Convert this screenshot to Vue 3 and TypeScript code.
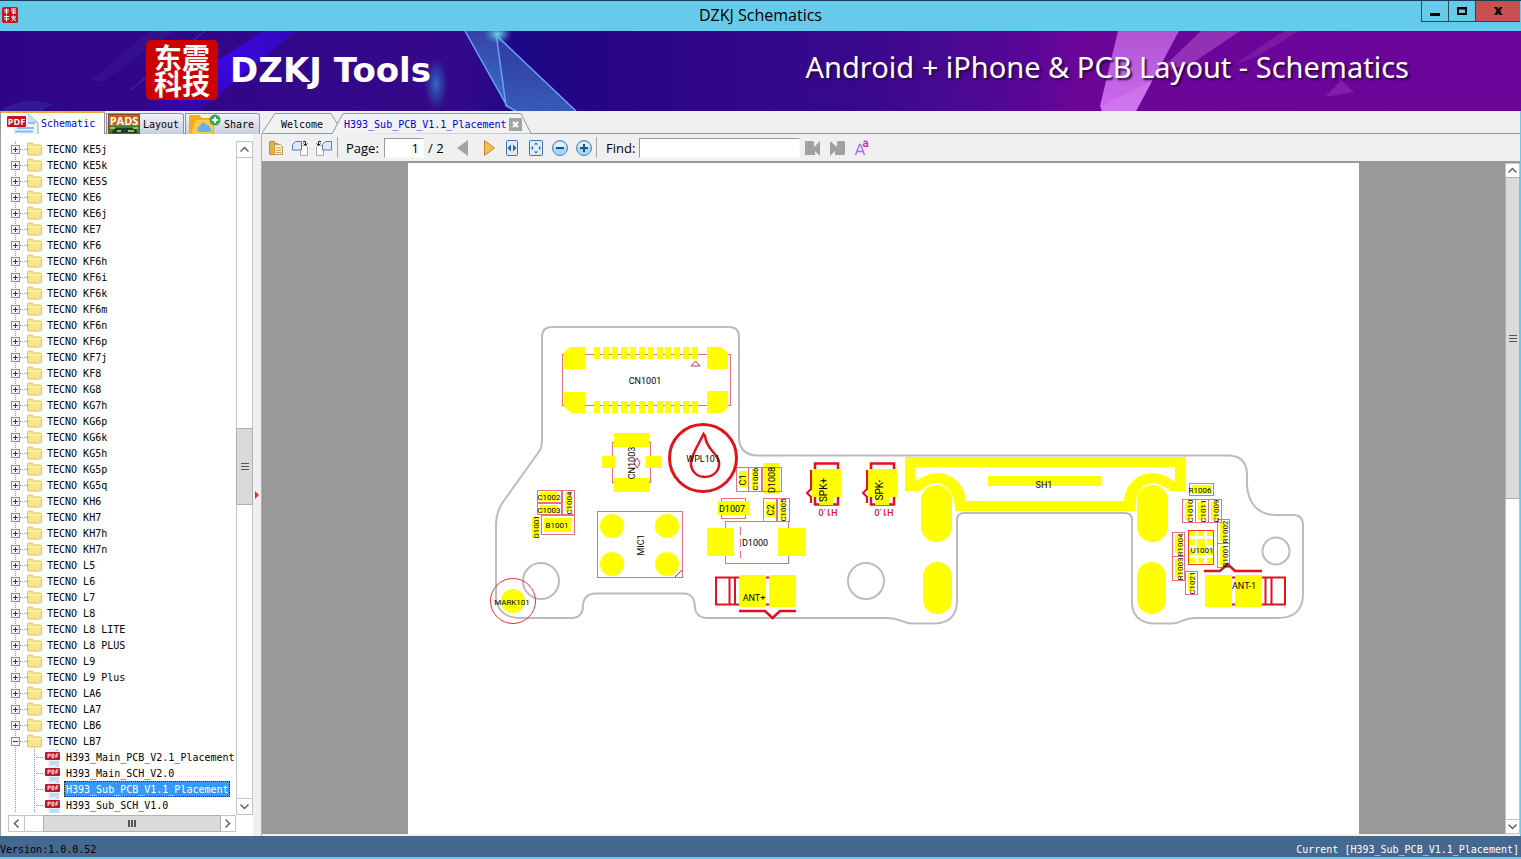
<script setup lang="ts">
import { ref } from 'vue'

interface Folder {
  name: string
  files?: string[]
}

interface Label {
  t: string
  x: number
  y: number
  v?: boolean
  size?: 'mid' | 'big'
}

type Box = [number, number, number, number]

const models = [
  'KE5j', 'KE5k', 'KE5S', 'KE6', 'KE6j', 'KE7', 'KF6', 'KF6h', 'KF6i', 'KF6k', 'KF6m', 'KF6n', 'KF6p',
  'KF7j', 'KF8', 'KG8', 'KG7h', 'KG6p', 'KG6k', 'KG5h', 'KG5p', 'KG5q', 'KH6', 'KH7', 'KH7h', 'KH7n',
  'L5', 'L6', 'L7', 'L8', 'L8 LITE', 'L8 PLUS', 'L9', 'L9 Plus', 'LA6', 'LA7', 'LB6',
]

const folders: Folder[] = [
  ...models.map((m) => ({ name: 'TECNO ' + m })),
  {
    name: 'TECNO LB7',
    files: ['H393_Main_PCB_V2.1_Placement', 'H393_Main_SCH_V2.0', 'H393_Sub_PCB_V1.1_Placement', 'H393_Sub_SCH_V1.0'],
  },
]

const opened = ref<string[]>(['TECNO LB7'])
const selected = ref('H393_Sub_PCB_V1.1_Placement')
const page = ref('1')
const find = ref('')

function toggle(name: string) {
  opened.value = opened.value.includes(name) ? opened.value.filter((n) => n !== name) : [...opened.value, name]
}

const pins = Array.from({ length: 12 }, (_, i) => 594 + Math.round(i * 8.93))

const pads: Box[] = [
  [614, 433, 35, 14], [614, 478, 35, 14], [602, 456, 13, 12], [646, 456, 15, 12],
  [739, 471, 8, 16], [752, 469, 6, 21], [764, 463, 15, 31],
  [718, 501, 31, 14], [766, 502, 9, 15], [780, 501, 6, 18],
  [707, 528, 27, 28], [778, 528, 28, 28],
  [988, 476, 113, 10],
  [1192, 485, 19, 9],
  [1185, 502, 7, 18], [1198, 502, 7, 18], [1211, 502, 7, 18],
  [1220, 522, 6, 19], [1220, 546, 6, 19],
  [1175, 535, 6, 18], [1175, 559, 6, 18], [1188, 573, 6, 18],
  [540, 492, 18, 9], [540, 505, 18, 8], [565, 493, 6, 19], [544, 518, 27, 14], [532, 517, 7, 21],
]

const outlines: Box[] = [
  [736, 467, 12, 24], [748, 467, 13, 24], [762, 467, 19, 24],
  [721, 498, 24, 20], [763, 498, 13, 23], [777, 498, 12, 23],
  [725, 521, 63, 42], [597, 511, 85, 66],
  [537, 490, 24, 12], [537, 503, 24, 11], [562, 490, 12, 24], [541, 515, 33, 19],
  [1189, 483, 24, 12], [1182, 499, 13, 23], [1195, 499, 13, 23], [1208, 499, 13, 23],
  [1217, 519, 12, 24], [1217, 543, 12, 24],
  [1172, 532, 12, 24], [1172, 556, 12, 24], [1185, 571, 12, 23],
]

const slots: Box[] = [
  [921, 485, 31, 57], [923, 562, 29, 52], [1137, 485, 31, 57], [1137, 562, 29, 52],
]

const labels: Label[] = [
  { t: 'CN1001', x: 645, y: 381, size: 'mid' },
  { t: 'CN1003', x: 632, y: 463, v: true, size: 'mid' },
  { t: 'WPL101', x: 703, y: 459, size: 'mid' },
  { t: 'C1', x: 743, y: 480, v: true, size: 'mid' },
  { t: 'C1006', x: 755, y: 479, v: true },
  { t: 'D1008', x: 772, y: 480, v: true, size: 'mid' },
  { t: 'D1007', x: 732, y: 509, size: 'mid' },
  { t: 'C2', x: 771, y: 510, v: true, size: 'mid' },
  { t: 'C1005', x: 783, y: 510, v: true },
  { t: 'D1000', x: 755, y: 543, size: 'mid' },
  { t: 'SPK+', x: 824, y: 490, v: true, size: 'big' },
  { t: 'SPK-', x: 880, y: 490, v: true, size: 'big' },
  { t: 'ANT+', x: 754, y: 598, size: 'mid' },
  { t: 'SH1', x: 1044, y: 485, size: 'mid' },
  { t: 'R1006', x: 1200, y: 490 },
  { t: 'C1010', x: 1190, y: 511, v: true },
  { t: 'C1011', x: 1203, y: 511, v: true },
  { t: 'C1009', x: 1216, y: 511, v: true },
  { t: 'R1002', x: 1225, y: 532, v: true },
  { t: 'R1001', x: 1225, y: 556, v: true },
  { t: 'R1004', x: 1180, y: 545, v: true },
  { t: 'R1003', x: 1180, y: 569, v: true },
  { t: 'C1021', x: 1192, y: 583, v: true },
  { t: 'U1001', x: 1202, y: 550 },
  { t: 'ANT-1', x: 1244, y: 586, size: 'mid' },
  { t: 'MARK101', x: 512, y: 602 },
  { t: 'MIC1', x: 641, y: 545, v: true, size: 'mid' },
  { t: 'C1002', x: 549, y: 497 },
  { t: 'C1003', x: 549, y: 510 },
  { t: 'C1004', x: 569, y: 503, v: true },
  { t: 'B1001', x: 557, y: 525 },
  { t: 'D1001', x: 536, y: 527, v: true },
]
</script>

<template>
  <div class="window">
    <header class="titlebar">
      <svg class="app-icon" viewBox="0 0 16 16" aria-hidden="true">
        <rect width="16" height="16" rx="2" fill="#c8141c" />
        <path d="M2 3h5M4.500 1.500v6M2.500 5l4 0M9 2h5M9 4h5M10 6h4M11.500 2v5M2 9.500h5M4.500 8.500v6M2 12h5M9 10h5M11.500 8.500v3M9.500 14l4-3M10 11l4 3" stroke="#fff" stroke-width="1" fill="none" />
      </svg>
      <h1>DZKJ Schematics</h1>
      <div class="controls">
        <button type="button" aria-label="Minimize"><svg viewBox="0 0 12 12"><path d="M1 8h10v3H1z" /></svg></button>
        <button type="button" aria-label="Maximize"><svg viewBox="0 0 12 12"><path d="M1 2h10v8H1zM3 4.500v3.500h6V4.500z" fill-rule="evenodd" /></svg></button>
        <button type="button" class="close" aria-label="Close"><svg viewBox="0 0 12 12"><path d="M2 2h3l1.500 2L8 2h2.500L8 6l2.500 4h-3L6.200 8 5 10H2l2.800-4z" /></svg></button>
      </div>
    </header>

    <section class="banner">
      <svg class="banner-art" viewBox="0 31 1521 80" preserveAspectRatio="none" aria-hidden="true">
        <defs>
          <linearGradient id="sky">
            <stop offset="0" stop-color="#2f0587" />
            <stop offset=".29" stop-color="#35088a" />
            <stop offset=".31" stop-color="#30098a" />
            <stop offset=".345" stop-color="#1c0886" />
            <stop offset=".4" stop-color="#270584" />
            <stop offset=".46" stop-color="#30078a" />
            <stop offset=".56" stop-color="#37088c" />
            <stop offset=".64" stop-color="#4d0894" />
            <stop offset=".68" stop-color="#5a0698" />
            <stop offset=".71" stop-color="#6c0699" />
            <stop offset="1" stop-color="#6b0499" />
          </linearGradient>
          <linearGradient id="beam" x1="0" y1="1" x2="1" y2="0">
            <stop offset="0" stop-color="#3506c8" stop-opacity=".3" />
            <stop offset=".6" stop-color="#3b08e2" />
            <stop offset="1" stop-color="#3207b8" />
          </linearGradient>
          <linearGradient id="glass" x1="0" y1="0" x2="0" y2="1">
            <stop offset="0" stop-color="#3443a8" />
            <stop offset="1" stop-color="#3c70c6" />
          </linearGradient>
          <linearGradient id="pink" x1="0" y1="0" x2="0" y2="1">
            <stop offset="0" stop-color="#b054d4" />
            <stop offset="1" stop-color="#cc6cee" />
          </linearGradient>
          <radialGradient id="glow">
            <stop offset="0" stop-color="#2a78c4" stop-opacity=".9" />
            <stop offset="1" stop-color="#2a60c0" stop-opacity="0" />
          </radialGradient>
          <radialGradient id="spark">
            <stop offset="0" stop-color="#6cdce4" />
            <stop offset="1" stop-color="#40a0d8" stop-opacity="0" />
          </radialGradient>
        </defs>
        <rect y="31" width="1521" height="80" fill="url(#sky)" />
        <path d="M263 31H296L198 111H140z" fill="url(#beam)" />
        <path d="M150 31h24l-70 50h-14z" fill="#3f2796" opacity=".3" />
        <path d="M205 31L130 90" stroke="#554bb8" opacity=".7" />
        <path d="M0 111q25-16 52-7l-10 7z" fill="#32309f" opacity=".5" />
        <ellipse cx="436" cy="84" rx="12" ry="27" fill="url(#glow)" />
        <path d="M465 31H496L507 107z" fill="url(#glass)" />
        <path d="M497 35L576 111H514L506 107z" fill="url(#glass)" opacity=".8" />
        <path d="M465 31L507 106L516 111M496 33L506 106M498 37L576 111" fill="none" stroke="#6f9ff0" stroke-width="1.500" />
        <ellipse cx="498" cy="34" rx="14" ry="10" fill="url(#spark)" />
        <path d="M1118 31H1179L1136 111H1102L1100 106z" fill="url(#pink)" />
        <path d="M1101 106L1152 81L1136 111H1102z" fill="#cf78f0" opacity=".7" />
        <path d="M1201 31H1240L1194 62L1155 75z" fill="#9e3cba" opacity=".8" />
        <path d="M1284 31H1299L1256 57L1235 64z" fill="#8427a8" opacity=".6" />
        <path d="M1341 80L1354 92L1325 97z" fill="#8a28ac" opacity=".7" />
      </svg>
      <div class="brand">
        <div class="seal" lang="zh">东震科技</div>
        <strong>DZKJ Tools</strong>
      </div>
      <p class="slogan">Android + iPhone &amp; PCB Layout - Schematics</p>
    </section>

    <main class="work">
      <aside class="side">
        <nav class="side-tabs">
          <button type="button" class="side-tab current">
            <svg width="34" height="20" viewBox="0 0 34 20" aria-hidden="true">
              <path d="M6 0h17l8 8v12H6z" fill="#eef4fb" />
              <path d="M21 0l10 9v11" fill="none" stroke="#8fa7be" />
              <path d="M21 0v9h9z" fill="#cfdeed" />
              <path d="M21 9h7M10 14h17M8 17.500h18" stroke="#86bce8" stroke-width="2" />
              <rect y="2" width="19" height="11" rx="1" fill="#c3131d" />
              <text x="9.500" y="11" text-anchor="middle" class="badge">PDF</text>
            </svg>
            <span>Schematic</span>
          </button>
          <button type="button" class="side-tab">
            <svg width="32" height="20" viewBox="0 0 32 20" aria-hidden="true">
              <rect width="32" height="20" fill="#c8601c" />
              <path d="M1 12h30v8H1z" fill="#3f7f35" />
              <path d="M4 17l4-3h18l3 3v3H4z" fill="#203c26" />
              <path d="M2 14h5M25 14h5M9 17h4M20 17h6" stroke="#86c55a" stroke-width="2" />
              <text x="16" y="11" text-anchor="middle" class="badge large">PADS</text>
              <rect x=".5" y=".5" width="31" height="19" fill="none" stroke="#8d4a1c" />
            </svg>
            <span>Layout</span>
          </button>
          <button type="button" class="side-tab share">
            <svg width="32" height="20" viewBox="0 0 32 20" aria-hidden="true">
              <path d="M0 3q0-2 2-2h8l3 3h10q2 0 2 2v14H0z" fill="#f2ae1c" />
              <path d="M2 20L7 6h19l-3 14z" fill="#fccb45" />
              <path d="M10 18q-4-4 1-6q2-6 6-2q4 1 4 4q3 2 0 4z" fill="#63b2ef" />
              <circle cx="26" cy="6" r="5.500" fill="#39a84a" />
              <path d="M23 6h6M26 3v6" stroke="#fff" stroke-width="2" />
            </svg>
            <span>Share</span>
          </button>
        </nav>

        <div class="panel">
          <ul class="tree">
            <li v-for="f in folders" :key="f.name">
              <div class="row">
                <button type="button" class="expander" :aria-label="'Toggle ' + f.name" @click="toggle(f.name)">
                  <svg viewBox="0 0 9 9">
                    <rect x=".5" y=".5" width="8" height="8" fill="#f4f4f4" stroke="#8c8c8c" />
                    <path d="M2 4.500h5" stroke="#223a66" />
                    <path v-if="!opened.includes(f.name)" d="M4.500 2v5" stroke="#223a66" />
                  </svg>
                </button>
                <i class="dots"></i>
                <svg class="folder" viewBox="0 0 15 14" aria-hidden="true">
                  <path d="M.5 2q0-1 1-1h4l1.500 2H13q1.500 0 1.500 1.500V12q0 1-1 1H1.500q-1 0-1-1z" fill="#f6e68a" stroke="#dcc25c" />
                  <path d="M1 5h13" stroke="#fff6c0" />
                </svg>
                <span class="name">{{ f.name }}</span>
              </div>
              <ul v-if="f.files && opened.includes(f.name)" class="files">
                <li v-for="file in f.files" :key="file" class="row">
                  <i class="dots"></i>
                  <svg class="pdf" viewBox="0 0 16 16" aria-hidden="true">
                    <path d="M3 0h8l4 3v13H3z" fill="#e6f0fa" />
                    <path d="M5 13h9M5 15h9M11 1h3" stroke="#9cc8ea" />
                    <rect y="3" width="15" height="8" rx="1" fill="#bb1822" />
                    <path d="M3 9V5h1.500q1 0 1 1t-1 1H3M7 5v4h.8q1.200 0 1.200-2T7.800 5zM11 9V5h2.500M11 7h2" fill="none" stroke="#fff" stroke-width=".9" />
                  </svg>
                  <button type="button" class="file" :class="{ picked: file === selected }" @click="selected = file">{{ file }}</button>
                </li>
              </ul>
            </li>
          </ul>
          <div class="bar vertical">
            <button type="button" aria-label="Scroll up"><svg viewBox="0 0 9 9"><path d="M.5 6.500l4-4l4 4" /></svg></button>
            <div class="track"><div class="thumb"><i></i></div></div>
            <button type="button" aria-label="Scroll down"><svg viewBox="0 0 9 9"><path d="M.5 2.500l4 4l4-4" /></svg></button>
          </div>
          <div class="bar horizontal">
            <button type="button" aria-label="Scroll left"><svg viewBox="0 0 9 9"><path d="M6.500 .5l-4 4l4 4" /></svg></button>
            <div class="track"><div class="thumb"><i></i></div></div>
            <button type="button" aria-label="Scroll right"><svg viewBox="0 0 9 9"><path d="M2.500 .5l4 4l-4 4" /></svg></button>
          </div>
        </div>
      </aside>

      <div class="splitter"><i></i></div>

      <section class="doc">
        <nav class="doc-tabs">
          <button type="button" class="doc-tab welcome">
            <svg viewBox="0 0 78 23" aria-hidden="true"><path d="M0 22L13 2.500H69L76 14" /></svg>
            <span>Welcome</span>
          </button>
          <div class="doc-tab active">
            <svg viewBox="0 0 202 23" aria-hidden="true"><path d="M0 23L11 2.500H189L199 22.500H202" /></svg>
            <span>H393_Sub_PCB_V1.1_Placement</span>
            <button type="button" class="shut" aria-label="Close tab"><svg viewBox="0 0 13 13"><path d="M4 4l5 5M9 4l-5 5" stroke="#fff" stroke-width="2" /></svg></button>
          </div>
        </nav>

        <div class="toolbar">
          <button type="button" class="tool" aria-label="Copy">
            <svg viewBox="0 0 16 16"><path d="M1.500 1.500h5v2h3v11h-8z" fill="#e8b04c" stroke="#bd8630" /><path d="M6.500 4.500h6l2 2v8h-8z" fill="#fdf3d4" stroke="#c29b50" /><path d="M8 8h5M8 10.500h5M8 12.500h5" stroke="#d2a04b" /></svg>
          </button>
          <button type="button" class="tool" aria-label="Rotate right">
            <svg viewBox="0 0 16 16"><path d="M8.500 5.500h6l1 1v9h-7z" fill="#fff" stroke="#aaa" /><path d="M3.500 1.500h6v8.500h-9v-5.500z" fill="#d9eafb" stroke="#547dae" /><path d="M11 1.500h2.500V5M11.500 3.500l2 2l2-2" fill="none" stroke="#222" /></svg>
          </button>
          <button type="button" class="tool" aria-label="Rotate left">
            <svg viewBox="0 0 16 16"><path d="M1.500 5.500h6v10h-7v-9z" fill="#fff" stroke="#aaa" /><path d="M9.500 1.500h6v8.500h-9v-5.500z" fill="#d9eafb" stroke="#547dae" /><path d="M5 1.500H2.500V5M.5 3.500l2 2l2-2" fill="none" stroke="#222" /></svg>
          </button>
          <i class="sep"></i>
          <label for="page">Page:</label>
          <input id="page" v-model="page" class="page-box" type="text" />
          <span class="total">/ 2</span>
          <button type="button" class="tool" aria-label="Previous page">
            <svg viewBox="0 0 16 16"><path d="M14 0v16L3 8z" fill="#a2a2a2" /></svg>
          </button>
          <button type="button" class="tool next" aria-label="Next page">
            <svg viewBox="0 0 16 16"><path d="M4.500 .5v15l10-7.500z" fill="#f2c052" stroke="#bd8a22" /></svg>
          </button>
          <button type="button" class="tool" aria-label="Fit width">
            <svg viewBox="0 0 16 16"><rect x="2.500" y=".5" width="11" height="15" rx="1" fill="#dcecfb" stroke="#3f72aa" /><path d="M7 4.500v7L3.500 8zM9 4.500v7L12.500 8z" fill="#2c639f" /></svg>
          </button>
          <button type="button" class="tool" aria-label="Fit page">
            <svg viewBox="0 0 16 16"><rect x="1.500" y=".5" width="13" height="15" rx="1" fill="#dcecfb" stroke="#3f72aa" /><path d="M8 2.500l2 2H6zM8 13.500l2-2H6zM3 8l2-2v4zM13 8l-2-2v4z" fill="#2c639f" /></svg>
          </button>
          <button type="button" class="tool" aria-label="Zoom out">
            <svg viewBox="0 0 16 16"><circle cx="8" cy="8" r="7.500" fill="#a8d4f7" stroke="#5684ac" /><path d="M2 8q0-6 6-6t6 6q-6-3-12 0" fill="#dff0fd" /><path d="M4 8h8" stroke="#18568f" stroke-width="2" /></svg>
          </button>
          <button type="button" class="tool" aria-label="Zoom in">
            <svg viewBox="0 0 16 16"><circle cx="8" cy="8" r="7.500" fill="#a8d4f7" stroke="#5684ac" /><path d="M2 8q0-6 6-6t6 6q-6-3-12 0" fill="#dff0fd" /><path d="M4 8h8M8 4v8" stroke="#18568f" stroke-width="2" /></svg>
          </button>
          <i class="sep tight"></i>
          <label for="find">Find:</label>
          <input id="find" v-model="find" class="find-box" type="text" />
          <button type="button" class="tool" aria-label="Find previous">
            <svg viewBox="0 0 16 16"><path d="M0 2l1-1h7l1 1v5l6-6v15l-5-5v4H0z" fill="#a0a0a0" /><path d="M2 4h1M6 4h1" stroke="#ccc" /></svg>
          </button>
          <button type="button" class="tool" aria-label="Find next">
            <svg viewBox="0 0 16 16"><path d="M15 2l-1-1H8L7 2v5L0 1v15l5-5v4h10z" fill="#a0a0a0" /><path d="M8 4h1M12 4h1" stroke="#ccc" /></svg>
          </button>
          <button type="button" class="tool" aria-label="Match case">
            <svg viewBox="0 0 16 16"><path d="M.5 15L4.500 4.500h1L9.500 15M2 11.500h6" fill="none" stroke="#9879ee" stroke-width="1.500" /><path d="M8.500 1.500q4-1 4 1.500v4M12.500 3.500q-4-.5-4 1.500t4 1" fill="none" stroke="#c53cae" stroke-width="1.500" /></svg>
          </button>
        </div>

        <div class="viewer">
          <div class="canvas">
            <svg class="sheet" viewBox="408 163 951 671" preserveAspectRatio="xMidYMid meet" role="img" aria-label="Component placement">
              <g fill="none" stroke="#bcbcbc" stroke-width="2">
                <path d="M552 327H729Q739 327 739 337V440Q741 455 757 455.500H1230Q1247 457 1247 475V485C1248 502 1257 515 1276 515H1293Q1303 515 1303 525V596C1302 610 1294 618 1278 618H1195C1182 618 1184 623 1172 623.500H1152Q1132 621 1132 602V520Q1132 513 1125 513H964Q957 513 957 520V602Q956 623 935 623.500H912C902 623 900 618 888 618H706Q696 617 695 608Q695 594 684 593.500H595Q584 594 583 605Q583 617 573 618H517Q498 616 496 598V526Q496 512 503 502L538 453Q542 448 542 440V337Q542 327 552 327Z" />
                <circle cx="541" cy="581" r="18" /><circle cx="866" cy="581" r="18" /><circle cx="1276" cy="551" r="13.500" />
              </g>

              <g fill="#ffff00">
                <rect v-for="(b, i) in pads" :key="i" :x="b[0]" :y="b[1]" :width="b[2]" :height="b[3]" />
                <rect v-for="(b, i) in slots" :key="'s' + i" :x="b[0]" :y="b[1]" :width="b[2]" :height="b[3]" :rx="b[2] / 2" />
                <path fill-rule="evenodd" d="M905 457H1185V491H1170Q1162 484 1152 483C1140 484 1134 496 1136 511H955C956 496 948 484 937 483Q927 484 920 491H905ZM915 467V482C936 464 964 475 966 501H1124C1126 475 1154 464 1175 482V467Z" />
                <circle cx="612" cy="526" r="12" /><circle cx="667" cy="526" r="12" />
                <circle cx="612" cy="564" r="12" /><circle cx="667" cy="564" r="12" />
                <circle cx="513" cy="601" r="12" />
              </g>

              <g fill="none" stroke="#e8707c" stroke-width="1" shape-rendering="crispEdges">
                <rect v-for="(b, i) in outlines" :key="i" :x="b[0] + 0.5" :y="b[1] + 0.5" :width="b[2]" :height="b[3]" />
                <rect x="562.500" y="354.500" width="168" height="51" />
                <path d="M614 442.500h-1.500v40h1.500M649 442.500h1.500v40h-1.500M740.500 527v8M740.500 539v8M740.500 551v7" />
              </g>
              <g fill="none" stroke="#e0303c">
                <path d="M691 366h9l-4.500-5zM675 577l7-7M637 458l3 5l-3 5l-3-5z" />
                <circle cx="513" cy="601" r="22.500" />
              </g>

              <g fill="#ffff00">
                <path d="M564 352L570 347H585V369H564zM707 347H721L728 353V369H707zM564 392H585V413H572L564 407zM707 391H728V407L722 413H707z" />
                <rect v-for="x in pins" :key="x" :x="x" y="347" width="6" height="12" />
                <rect v-for="x in pins" :key="'b' + x" :x="x" y="401" width="6" height="12" />
                <rect x="707" y="528" width="27" height="28" /><rect x="778" y="528" width="28" height="28" />
                <rect x="602" y="456" width="13" height="12" /><rect x="646" y="456" width="15" height="12" />
                <rect x="718" y="501" width="31" height="14" />
              </g>

              <g fill="none" stroke="#e31218" stroke-width="3">
                <circle cx="703" cy="458" r="33.500" />
                <path d="M703.500 434C699 444 693 452 691 461C690 471 697 477 705 477C714 477 720 470 719 462C718 453 707 451 705 436Z" stroke-width="2.500" />
              </g>

              <g v-for="dx in [0, 56]" :key="dx" :transform="`translate(${dx} 0)`">
                <path d="M815 470V463.500H838V470M815 497V504.500H838V497" fill="none" stroke="#e31218" stroke-width="2.500" />
                <path d="M812 469h29v28h-8v8h-14v-8h-7z" fill="#ffff00" />
                <path d="M811 470V489L807 493L811 497V503" fill="none" stroke="#e31218" stroke-width="2" />
                <text class="note" transform="translate(828 512) rotate(180)">H1.0</text>
              </g>

              <g fill="none" stroke="#e31218" stroke-width="2">
                <path d="M739 577.500H716V604.500H739M729.500 577V605M735 577V605M766 577.500h4M766 604.500h4" />
                <path d="M739 611H765L772.500 618L780 611H796M1204 571H1220L1227.500 564L1235 571H1262" stroke-width="2.500" />
                <path d="M1262 577.500H1285V604.500H1262M1265.500 577V605M1271.500 577V605M1231 577.500h4M1231 604.500h4" />
              </g>
              <g fill="#ffff00">
                <rect x="739" y="575" width="27" height="32" /><rect x="769" y="575" width="27" height="32" />
                <rect x="1205" y="575" width="27" height="32" /><rect x="1235" y="575" width="27" height="32" />
                <path d="M1189 531h6v5h-6zM1198 531h6v5h-6zM1207 531h6v5h-6zM1189 539h6v6h-6zM1207 539h6v6h-6zM1189 549h6v6h-6zM1207 549h6v6h-6zM1189 558h6v5h-6zM1198 558h6v5h-6zM1207 558h6v5h-6zM1197 539h8v16h-8z" />
              </g>
              <rect x="1188.500" y="530.500" width="25" height="34" fill="none" stroke="#ee3d20" />

              <text
                v-for="l in labels"
                :key="l.t"
                class="ref"
                :class="l.size"
                :transform="`translate(${l.x} ${l.y})${l.v ? ' rotate(-90)' : ''}`"
                dy="3"
              >{{ l.t }}</text>
            </svg>
          </div>
          <div class="bar vertical wide">
            <button type="button" aria-label="Page up"><svg viewBox="0 0 9 9"><path d="M.5 6.500l4-4l4 4" /></svg></button>
            <div class="track"><div class="thumb"><i></i></div></div>
            <button type="button" aria-label="Page down"><svg viewBox="0 0 9 9"><path d="M.5 2.500l4 4l4-4" /></svg></button>
          </div>
        </div>
      </section>
    </main>

    <footer class="status">
      <span>Version:1.0.0.52</span>
      <span class="current-doc">Current [H393_Sub_PCB_V1.1_Placement]</span>
    </footer>
  </div>
</template>

<style>
html,
body {
  margin: 0;
  overflow: hidden;
}
</style>

<style scoped>
.window {
  box-sizing: border-box;
  display: flex;
  flex-direction: column;
  height: 100vh;
  border-top: 1px solid #173f57;
  border-bottom: 2px solid #66cbea;
  background: #f0f0f0;
  color: #000;
  font: 10px/16px "DejaVu Sans Mono", "Liberation Mono", monospace;
}
.window *,
.window *::before {
  box-sizing: border-box;
}
button {
  margin: 0;
  padding: 0;
  border: 0;
  background: none;
  color: inherit;
  font: inherit;
}
svg {
  display: block;
}
ul {
  margin: 0;
  padding: 0;
  list-style: none;
}

/* title bar */
.titlebar {
  display: grid;
  grid-template-columns: 1fr auto 1fr;
  flex: none;
  height: 30px;
  background: #66cbea;
}
.app-icon {
  width: 16px;
  height: 16px;
  margin: 6px 0 0 2px;
}
h1 {
  margin: 0;
  font: 16px/28px "Open Sans", "Noto Sans", sans-serif;
}
.controls {
  display: flex;
  justify-self: end;
  height: 21px;
  margin-right: 1px;
  border: 1px solid #23485a;
  border-width: 0 0 1px 1px;
}
.controls button {
  display: grid;
  place-items: center;
  width: 27px;
  border-right: 1px solid #23485a;
}
.controls .close {
  width: 44px;
  border-right: 0;
  background: #c75050;
}
.controls svg {
  width: 12px;
  height: 12px;
}

/* banner */
.banner {
  position: relative;
  display: flex;
  align-items: center;
  justify-content: space-between;
  flex: none;
  height: 80px;
  padding: 0 112px 0 146px;
  overflow: hidden;
  color: #fff;
}
.banner-art {
  position: absolute;
  inset: 0;
  width: 100%;
  height: 100%;
}
.brand {
  position: relative;
  display: flex;
  align-items: center;
  gap: 12px;
}
.seal {
  width: 72px;
  height: 60px;
  margin-bottom: 2px;
  padding: 4px 7px;
  border-radius: 5px;
  background: #cc0202;
  font: bold 28px/26px "Noto Sans CJK SC", sans-serif;
  text-align: center;
  word-break: break-all;
}
.brand strong {
  padding-bottom: 3px;
  font: bold 34px/40px "DejaVu Sans", sans-serif;
}
.slogan {
  position: relative;
  margin: 0 0 8px;
  font: 29px/40px "Noto Sans", "Open Sans", sans-serif;
  text-shadow: 2px 2px 2px #2a0845;
  white-space: nowrap;
}

/* work area */
.work {
  display: flex;
  flex: 1;
  min-height: 0;
}
.side {
  display: flex;
  flex-direction: column;
  width: 253px;
}
.side-tabs {
  display: flex;
  flex: none;
  gap: 1px;
  width: 260px;
  height: 23px;
  border-bottom: 1px solid #8e98a0;
}
.side-tab {
  display: flex;
  align-items: center;
  gap: 3px;
  width: 78px;
  height: 21px;
  margin-top: 2px;
  padding-left: 1px;
  border: 1px solid #8b93a0;
  border-bottom: 0;
  border-radius: 0 3px 0 0;
  background: linear-gradient(#f2f3f8, #c9cde0);
}
.side-tab span {
  padding-top: 2px;
}
.side-tab.current {
  width: 105px;
  height: 23px;
  margin-top: 0;
  padding-left: 6px;
  gap: 0;
  border-top: 2px solid #f3a52f;
  border-radius: 0;
  background: #fff;
  color: #0000cd;
}
.side-tab.current span {
  padding-top: 0;
}
.side-tab.share {
  width: 75px;
  padding-left: 3px;
}
.badge {
  fill: #fff;
  font: bold 9px "Open Sans", sans-serif;
}
.badge.large {
  font-size: 11px;
}
.panel {
  display: grid;
  grid-template-columns: minmax(0, 1fr) 17px;
  grid-template-rows: minmax(0, 1fr) 17px;
  flex: 1;
  min-height: 0;
  padding: 7px 0 4px 7px;
  border-left: 1px solid #9aa3ab;
  background: #fff;
}
.tree {
  overflow: hidden;
}
.row {
  display: flex;
  align-items: center;
  height: 16px;
  background: repeating-linear-gradient(#8a9aa0 0 1px, transparent 1px 2px) 7px 0 / 1px 100% no-repeat;
  white-space: nowrap;
}
.expander {
  width: 9px;
  height: 9px;
  margin-left: 3px;
}
.expander svg {
  width: 9px;
  height: 9px;
}
.dots {
  width: 7px;
  height: 1px;
  background: repeating-linear-gradient(90deg, #8a9aa0 0 1px, transparent 1px 2px);
}
.folder {
  width: 15px;
  height: 14px;
}
.name {
  margin-left: 5px;
  padding-top: 2px;
}
.files .row {
  background:
    repeating-linear-gradient(#8a9aa0 0 1px, transparent 1px 2px) 7px 0 / 1px 100% no-repeat,
    repeating-linear-gradient(#8a9aa0 0 1px, transparent 1px 2px) 26px 0 / 1px 100% no-repeat;
}
.files .dots {
  width: 9px;
  margin-left: 28px;
}
.pdf {
  width: 16px;
  height: 16px;
}
.file {
  height: 16px;
  margin-left: 3px;
  padding: 2px 0 0 1px;
  border: 1px solid transparent;
  line-height: 12px;
}
.file.picked {
  border: 1px dotted #1a1a1a;
  background: #3399ff;
  color: #fff;
}

/* scroll bars */
.bar {
  display: flex;
  background: #fff;
}
.bar.vertical {
  flex-direction: column;
  border: 1px solid #c4c4c4;
}
.bar.horizontal {
  border: 1px solid #c4c4c4;
}
.bar button {
  display: grid;
  place-items: center;
  flex: none;
  width: 15px;
  height: 15px;
}
.bar button svg {
  width: 9px;
  height: 9px;
  fill: none;
  stroke: #606060;
  stroke-width: 1.5px;
}
.track {
  display: flex;
  flex: 1;
  min-height: 0;
}
.vertical .track {
  flex-direction: column;
  padding-top: 271px;
  border-top: 1px solid #c4c4c4;
  border-bottom: 1px solid #c4c4c4;
}
.horizontal .track {
  padding-left: 19px;
  border-left: 1px solid #c4c4c4;
}
.thumb {
  display: grid;
  place-items: center;
  background: #dadada;
  outline: 1px solid #b0b0b0;
}
.vertical .thumb {
  height: 75px;
}
.horizontal .thumb {
  flex: 1;
}
.thumb i {
  width: 8px;
  height: 7px;
  background: repeating-linear-gradient(#555 0 1px, transparent 1px 3px);
}
.horizontal .thumb i {
  background: repeating-linear-gradient(90deg, #555 0 2px, transparent 2px 3px);
}
.vertical.wide .track {
  padding-top: 0;
}
.vertical.wide .thumb {
  height: 320px;
}
.splitter {
  display: grid;
  place-items: center;
  width: 9px;
  margin-top: 23px;
  border-right: 1px solid #a8adb2;
}
.splitter i {
  border: 4px solid transparent;
  border-right: 0;
  border-left-color: #e5301c;
  margin-bottom: -20px;
}

/* document area */
.doc {
  display: flex;
  flex-direction: column;
  flex: 1;
  min-width: 0;
  padding-bottom: 2px;
  border-right: 1px solid #66cbea;
}
.doc-tabs {
  display: flex;
  flex: none;
  height: 23px;
  background: linear-gradient(#8e98a0, #8e98a0) 0 22px / 100% 1px no-repeat;
}
.doc-tab {
  position: relative;
  display: flex;
  align-items: center;
  height: 23px;
  padding-top: 4px;
}
.doc-tab > svg {
  position: absolute;
  inset: 0;
  width: 100%;
  height: 100%;
  fill: #f2f2f2;
  stroke: #8e98a0;
}
.doc-tab > span {
  position: relative;
}
.doc-tab.welcome {
  width: 78px;
  padding-left: 19px;
}
.doc-tab.active {
  width: 202px;
  margin-left: -8px;
  padding-left: 12px;
  gap: 2px;
  color: #0000cd;
}
.shut {
  position: relative;
  width: 13px;
  height: 13px;
  background: #a4a4a4;
}
.toolbar {
  display: flex;
  align-items: center;
  flex: none;
  height: 27px;
  padding-left: 2px;
  font: 13px/20px "Open Sans", "Noto Sans", sans-serif;
}
.tool {
  display: grid;
  place-items: center;
  flex: none;
  width: 24px;
  height: 24px;
}
.tool svg {
  width: 16px;
  height: 16px;
}
.tool.next {
  margin-left: 2px;
}
.find-box ~ .tool {
  margin-left: 1px;
}
.sep {
  width: 1px;
  height: 21px;
  margin: 0 8px 0 1px;
  background: #a8a8a8;
}
.sep.tight {
  margin: 0 9px 0 0;
}
.toolbar input {
  height: 20px;
  padding: 0 4px;
  border: 1px solid #9a9a9a;
  border-right-color: #fafafa;
  border-bottom-color: #fafafa;
  background: #fff;
  color: #000;
  font: inherit;
}
.toolbar label {
  flex: none;
  width: 38px;
}
.toolbar label[for="find"] {
  width: 33px;
}
.toolbar .page-box {
  width: 40px;
  text-align: right;
}
.toolbar .find-box {
  width: 161px;
}
.total {
  width: 22px;
  margin-left: 4px;
}
.viewer {
  display: flex;
  flex: 1;
  min-height: 0;
  background: #999;
}
.canvas {
  display: flex;
  flex: 1;
  justify-content: center;
  min-width: 0;
  padding: 2px 146px 0;
}
.sheet {
  width: 100%;
  height: 100%;
  background: #fff;
}
.ref {
  font: 8px Roboto, sans-serif;
  text-anchor: middle;
}
.ref.mid {
  font-size: 9px;
}
.ref.big {
  font-size: 10px;
}
.note {
  fill: #e31218;
  font: 500 9px Roboto, sans-serif;
  text-anchor: middle;
  dominant-baseline: central;
}
.bar.wide {
  width: 15px;
  margin-top: 2px;
}
.bar.wide button {
  width: 13px;
  height: 13px;
}

/* status bar */
.status {
  display: flex;
  align-items: flex-end;
  justify-content: space-between;
  flex: none;
  height: 21px;
  padding: 0 2px 0 0;
  background: #44688f;
  line-height: 14px;
}
.current-doc {
  color: #fff;
}
</style>
